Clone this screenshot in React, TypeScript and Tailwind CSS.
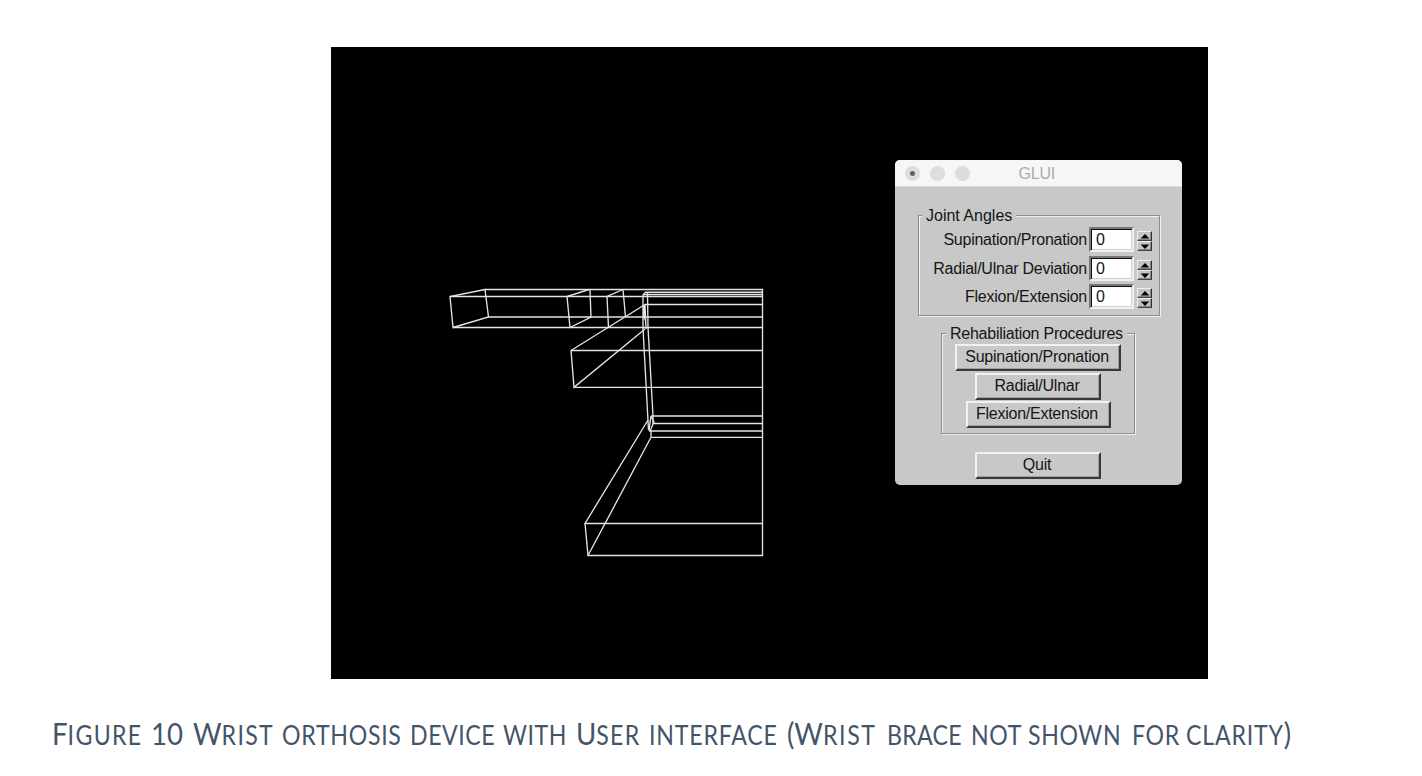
import React from "react";

const font = "font-['Liberation_Sans',Arial,sans-serif]";

function Group({ title, className, legend, children }: { title: string; className: string; legend: string; children: React.ReactNode }) {
  return (
    <section className={`relative border border-[#8c8c8c] shadow-[1px_1px_0_#f0f0f0,inset_1px_1px_0_#f0f0f0] ${className}`}>
      <h2 className={`absolute -top-[10px] bg-[#c8c8c8] whitespace-nowrap leading-[20px] ${legend}`}>{title}</h2>
      {children}
    </section>
  );
}

function Stepper() {
  return (
    <div className="ml-[3px] mt-px flex h-[20px] w-[15px] flex-col">
      {["M4 6h6L7 2.8z", "M4 3h6L7 6.2z"].map((d) => (
        <button key={d} className="h-[10px] w-[15px] border border-t-[#eeeeee] border-l-[#eeeeee] border-r-[#333] border-b-[#444] bg-[#c4c4c4] shadow-[inset_-1px_-1px_0_#858585]">
          <svg className="block h-[8px] w-[13px]" viewBox="0 0 13 8"><path d={d} fill="#000" stroke="#000" strokeWidth="1.1" /></svg>
        </button>
      ))}
    </div>
  );
}

function AngleRow({ label }: { label: string }) {
  return (
    <div className="flex h-[28.5px] items-start justify-end pr-[7px]">
      <label className="mr-[2px] leading-[26px]">{label}</label>
      <div className="h-[25px] w-[45px] border-2 border-t-[#777] border-l-[#777] border-r-[#f0f0f0] border-b-[#f0f0f0] bg-white shadow-[inset_1px_1px_0_#111,inset_-1px_-1px_0_#d2d2d2]">
        <span className="block pl-[5px] leading-[22px]">0</span>
      </div>
      <div className="pt-[3px]"><Stepper /></div>
    </div>
  );
}

function PushButton({ children, className }: { children: string; className: string }) {
  return (
    <button className={`block h-[27px] border-2 border-t-[#f2f2f2] border-l-[#f2f2f2] border-r-[#383838] border-b-[#383838] bg-[#c8c8c8] pb-px pr-[2px] leading-[20px] shadow-[inset_-1px_-1px_0_#a0a0a0] ${className}`}>
      {children}
    </button>
  );
}

function Wireframe() {
  return (
    <svg className="block h-[632px] w-[877px]" viewBox="331 47 877 632" fill="none" stroke="#e4e4e4" strokeWidth="1.35">
      <path d="M485 289.5H762.5V555.5H588L585 523.5H762.5" />
      <path d="M450 296.5H762.5M488.500 317H762.500M453 327.500H762.500M571 350.500H762.500M574 387.300H762.500" />
      <path d="M485 289.500L450 296.500L453 327.500L488.500 317Z" />
      <path d="M589 289.500L567 296.500L570 327.500L591 317L590 290" />
      <path d="M623 289.500L607 296.500L608.500 327.500M623 289.500L625.500 317" />
      <path d="M645 292.200H762.500M644 294.500H762.500M645 304.500H762.500M645 304.500L571 350.500L574 387.300L645 329" />
      <path d="M645 292.500L643 295V328L648.500 430M647.500 292.500L648 327L653 416V424M645 304.500L646 329M644 305V316L646 322" />
      <path d="M651 416H762.500M653 423.500H762.500M649 431H762.500M651 437.300H762.500" />
      <path d="M648 420L585 523.500M651 437.300L588 555.500M651 416L649 430L651 431V437.300M651 416L654 422L650 431" />
    </svg>
  );
}

function GluiWindow() {
  return (
    <div className={`absolute left-[564px] top-[113px] h-[325px] w-[287px] overflow-hidden rounded-[5px] bg-[#c8c8c8] text-[16px] tracking-[-0.25px] text-[#151515] ${font}`}>
      <header className="relative flex h-[27px] items-center bg-[#f6f6f6] pl-[9.500px] border-b border-[#dedede]">
        <div className="flex gap-[10px]">
          <span className="flex size-[15px] items-center justify-center rounded-full bg-[#dddddd]"><i className="size-[5px] rounded-full bg-[#626262]" /></span>
          <span className="size-[15px] rounded-full bg-[#dddddd]" />
          <span className="size-[15px] rounded-full bg-[#dddddd]" />
        </div>
        <h1 className="ml-[49px] pt-px text-[16px] tracking-[-0.2px] text-[#aaa]">GLUI</h1>
      </header>
      <main className="flex flex-col">
        <Group title="Joint Angles" className="ml-[23px] mt-[28px] h-[101px] w-[242px] pt-[11px]" legend="left-[3px] pl-[4px] pr-[4px] tracking-[0px]">
          <AngleRow label="Supination/Pronation" />
          <AngleRow label="Radial/Ulnar Deviation" />
          <AngleRow label="Flexion/Extension" />
        </Group>
        <Group title="Rehabiliation Procedures" className="ml-[46px] mt-[17px] h-[101px] w-[194px] pt-[10px]" legend="left-[4px] px-[4px]">
          <div className="flex flex-col items-center gap-[1.5px]">
            <PushButton className="w-[166px]">Supination/Pronation</PushButton>
            <PushButton className="w-[126px]">Radial/Ulnar</PushButton>
            <PushButton className="w-[145px]">Flexion/Extension</PushButton>
          </div>
        </Group>
        <PushButton className="ml-[80px] mt-[18px] w-[126px]">Quit</PushButton>
      </main>
    </div>
  );
}

const caption = [
  { big: "F", small: "igure", width: "w-[99px]", tracking: "tracking-[1.5px]" },
  { big: "10", small: "", width: "w-[42px]", tracking: "" },
  { big: "W", small: "rist", width: "w-[89px]", tracking: "tracking-[1.5px]" },
  { big: "", small: "orthosis", width: "w-[128px]", tracking: "tracking-[0.8px]" },
  { big: "", small: "device", width: "w-[93px]", tracking: "tracking-[0.6px]" },
  { big: "", small: "with", width: "w-[73px]", tracking: "tracking-[0.6px]" },
  { big: "U", small: "ser", width: "w-[73px]", tracking: "tracking-[1.4px]" },
  { big: "", small: "interface", width: "w-[138px]", tracking: "tracking-[0.9px]" },
  { big: "(W", small: "rist", width: "w-[100px]", tracking: "tracking-[1.8px]" },
  { big: "", small: "brace", width: "w-[84px]", tracking: "tracking-[0.3px]" },
  { big: "", small: "not", width: "w-[57px]", tracking: "tracking-[0.7px]" },
  { big: "", small: "shown", width: "w-[104px]", tracking: "tracking-[0.7px]" },
  { big: "", small: "for", width: "w-[54px]", tracking: "tracking-[0.7px]" },
  { big: "", small: "clarity", end: ")", width: "w-[110px]", tracking: "tracking-[0.9px]" },
];

export default function App() {
  return (
    <div className="h-[776px] w-[1422px] overflow-hidden bg-white pt-[47px]">
      <figure>
        <div className="relative ml-[331px] h-[632px] w-[877px] bg-black">
          <Wireframe />
          <GluiWindow />
        </div>
        <figcaption className="ml-[52px] mt-[34px] flex h-[40px] items-baseline whitespace-nowrap font-['Lato',sans-serif] text-[31px] leading-[40px] text-[#44546a]">
          {caption.map((w, i) => (
            <span key={i} className={`shrink-0 ${w.width}`}>
              <span className="inline-block origin-left scale-x-[0.89]">
                {w.big}<span className={`text-[26px] uppercase ${w.tracking}`}>{w.small}</span>{w.end}
              </span>{" "}
            </span>
          ))}
        </figcaption>
      </figure>
    </div>
  );
}
